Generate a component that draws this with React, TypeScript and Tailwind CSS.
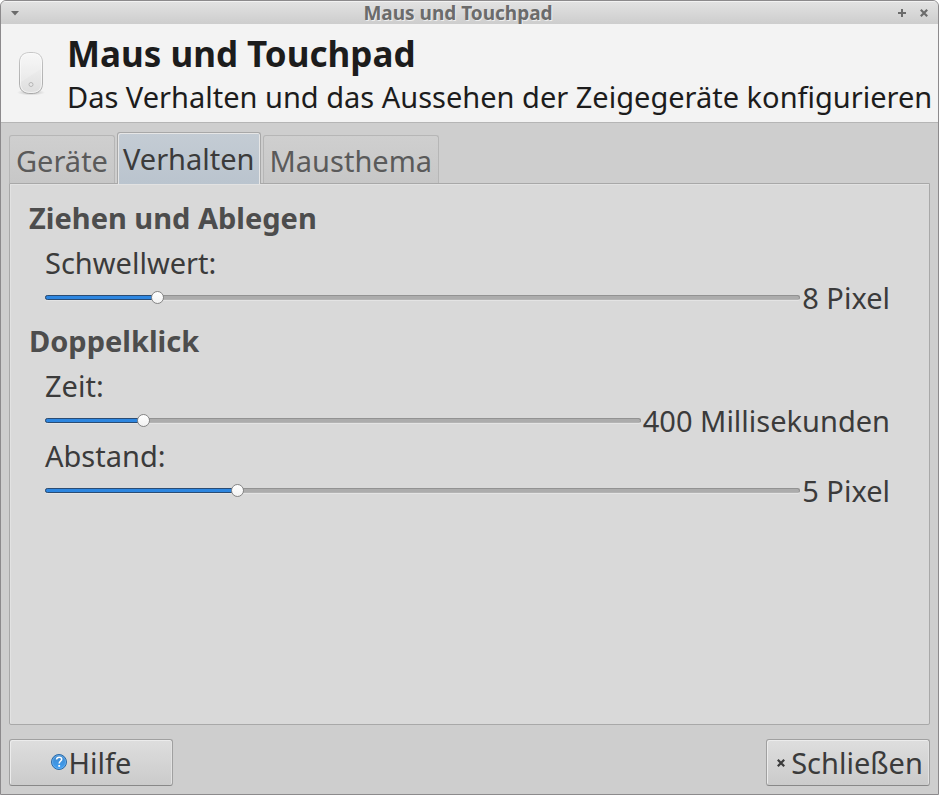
import { useState } from "react";

interface SliderRowProps {
  id: string;
  label: string;
  unit: string;
  min: number;
  max: number;
  step?: number;
  initial: number;
}

function SliderRow({ id, label, unit, min, max, step = 1, initial }: SliderRowProps) {
  const [value, setValue] = useState(initial);
  const percent = ((value - min) / (max - min)) * 100;

  return (
    <div>
      <label htmlFor={id} className="block w-fit">
        {label}
      </label>
      <div className="flex items-center gap-[2px]">
        <div className="relative flex h-[14px] min-w-0 flex-1 items-center">
          <div className="h-[5px] w-full overflow-hidden rounded-full border border-[#929292] border-b-[#b4b4b4] bg-[#acacac] shadow-[0_1px_0_#e4e4e4]" />
          <div
            className="absolute left-0 h-[5px] rounded-l-full border border-[#2a4c74] bg-[#2d86e0]"
            style={{ width: `${percent}%` }}
          />
          <input
            id={id}
            type="range"
            min={min}
            max={max}
            step={step}
            value={value}
            onChange={(e) => setValue(Number(e.target.value))}
            className="absolute inset-0 m-0 h-[14px] w-full appearance-none bg-transparent outline-none [&::-webkit-slider-thumb]:size-[13px] [&::-webkit-slider-thumb]:appearance-none [&::-webkit-slider-thumb]:rounded-full [&::-webkit-slider-thumb]:border [&::-webkit-slider-thumb]:border-[#858585] [&::-webkit-slider-thumb]:bg-linear-to-b [&::-webkit-slider-thumb]:from-white [&::-webkit-slider-thumb]:to-[#f2f2f2]"
          />
        </div>
        <output htmlFor={id} className="whitespace-nowrap">
          {value} {unit}
        </output>
      </div>
    </div>
  );
}

function MouseIcon() {
  return (
    <svg viewBox="0 0 28 48" className="h-[48px] w-[28px] shrink-0" aria-hidden="true">
      <defs>
        <linearGradient id="mouseBody" x1="0" y1="0" x2="0" y2="1">
          <stop offset="0" stopColor="#f6f6f6" />
          <stop offset="1" stopColor="#dedede" />
        </linearGradient>
        <linearGradient id="mouseEdge" x1="0" y1="0" x2="0" y2="1">
          <stop offset="0" stopColor="#c6c6c6" />
          <stop offset="1" stopColor="#a8a8a8" />
        </linearGradient>
        <radialGradient id="mouseShadow">
          <stop offset="0" stopColor="#000" stopOpacity="0.25" />
          <stop offset="1" stopColor="#000" stopOpacity="0" />
        </radialGradient>
      </defs>
      <ellipse cx="14" cy="43.500" rx="14" ry="3" fill="url(#mouseShadow)" />
      <path
        d="M14 3.500C20 3.500 25.500 5 25.500 14V34C25.500 42 21 44.500 14 44.500C7 44.500 2.500 42 2.500 34V14C2.500 5 8 3.500 14 3.500Z"
        fill="url(#mouseBody)"
        stroke="url(#mouseEdge)"
      />
      <path
        d="M14 4.500C19.500 4.500 24.500 6 24.500 14V34C24.500 41 20.500 43.500 14 43.500C7.500 43.500 3.500 41 3.500 34V14C3.500 6 8.500 4.500 14 4.500Z"
        fill="none"
        stroke="#fff"
        opacity="0.6"
      />
      <path d="M4 14C4 6 9 5 14 5C19 5 24 6 24 14V20L4 33Z" fill="#fff" opacity="0.2" />
      <circle cx="14" cy="35.500" r="2" fill="#e8e8e8" stroke="#b6b6b6" />
    </svg>
  );
}

function HelpIcon() {
  return (
    <svg viewBox="1 1 18 18" className="size-[18px] shrink-0" aria-hidden="true">
      <defs>
        <linearGradient id="helpFill" x1="0" y1="0" x2="0" y2="1">
          <stop offset="0" stopColor="#3f86c8" />
          <stop offset="1" stopColor="#40a0f6" />
        </linearGradient>
      </defs>
      <circle cx="9" cy="9" r="7.500" fill="url(#helpFill)" stroke="#2d6ba8" />
      <circle cx="9" cy="9" r="6.500" fill="none" stroke="#7cbcf2" strokeWidth="0.600" />
      <path
        d="M6.500 6.500C6.700 4.600 8 4.200 9.200 4.200C10.700 4.200 11.700 5 11.700 6.300C11.700 8 9.200 8.200 9.200 10.600"
        fill="none"
        stroke="#fff"
        strokeWidth="1.500"
      />
      <rect x="8.300" y="12" width="1.800" height="1.800" fill="#fff" />
    </svg>
  );
}

function CrossIcon({ className }: { className: string }) {
  return (
    <svg viewBox="0 0 8 8" className={className} aria-hidden="true">
      <path d="M0.800 0.800L7.200 7.200M7.200 0.800L0.800 7.200" stroke="currentColor" strokeWidth="2.200" />
    </svg>
  );
}

const tabs = ["Geräte", "Verhalten", "Mausthema"];

const buttonClass =
  "flex h-[47px] w-[164px] items-center justify-center rounded-[3px] border border-[#a0a0a0] border-b-[#888] bg-linear-to-b from-[#dedede] to-[#cbcbcb] shadow-[inset_1px_1px_0_#ececec,inset_-1px_0_0_#e2e2e2] active:from-[#c4c4c4]";

export default function App() {
  const [activeTab, setActiveTab] = useState("Verhalten");

  return (
    <div className="min-h-screen bg-white font-['Noto_Sans',sans-serif] text-[29px] leading-[35px] text-[#3b3b3b]">
      <div className="flex min-h-screen flex-col overflow-hidden rounded-t-[6px] border border-[#8c8a8c] bg-[#cecece]">
        <div className="flex h-[23px] shrink-0 items-center border-t border-[#f2f2f2] bg-linear-to-b from-[#e2e2e2] to-[#cdcdcd] px-[9px] text-[#6b6b6b]">
          <div className="flex flex-1">
            <button type="button" aria-label="Fenstermenü" className="flex size-[10px] items-center justify-center">
              <svg viewBox="0 0 8 5" className="h-[5px] w-[8px]" aria-hidden="true">
                <path d="M0 0H8L4 4.500Z" fill="currentColor" />
              </svg>
            </button>
          </div>
          <h1 className="mr-[22px] text-[19px] leading-[22px] font-bold [text-shadow:1px_1px_0_#eee]">
            Maus und Touchpad
          </h1>
          <div className="flex flex-1 items-center justify-end gap-[14px] pr-px">
            <button type="button" aria-label="Maximieren" className="size-[8px]">
              <svg viewBox="0 0 8 8" className="size-[8px]" aria-hidden="true">
                <path d="M4 0V8M0 4H8" stroke="currentColor" strokeWidth="2" />
              </svg>
            </button>
            <button type="button" aria-label="Fenster schließen" className="size-[8px]">
              <CrossIcon className="size-[8px]" />
            </button>
          </div>
        </div>

        <header className="flex shrink-0 items-center gap-[22px] border-b border-[#b5b5b5] bg-[#f3f3f3] py-[6px] pl-4 text-[#1c1c1c]">
          <MouseIcon />
          <div className="whitespace-nowrap">
            <h2 className="text-[35px] leading-[48px] font-bold">Maus und Touchpad</h2>
            <p className="leading-[38px]">Das Verhalten und das Aussehen der Zeigegeräte konfigurieren</p>
          </div>
        </header>

        <main className="flex flex-1 flex-col px-2 pt-[9px] pb-2">
          <div role="tablist" className="flex items-end gap-[2px]">
            {tabs.map((tab) => (
              <button
                key={tab}
                type="button"
                role="tab"
                aria-selected={tab === activeTab}
                onClick={() => setActiveTab(tab)}
                className={
                  tab === activeTab
                    ? "relative z-10 -mb-px h-[52px] rounded-t-[3px] border border-b-0 border-[#a8a8a8] bg-linear-to-b from-[#c4ccd4] to-[#bac4ce] px-[5px] shadow-[inset_1px_1px_0_#e6e6e6,inset_-1px_0_0_#e6e6e6]"
                    : "h-[48px] rounded-t-[3px] border border-b-0 border-[#b6b6b6] bg-linear-to-b from-[#cfcfcf] to-[#c7c7c7] px-[6px] pt-[2px] text-[#5a5a5a]"
                }
              >
                {tab}
              </button>
            ))}
          </div>

          <div
            role="tabpanel"
            className="flex-1 rounded-b-[2px] border border-[#a8a8a8] bg-[#d9d9d9] py-4 pr-[39px] pl-[19px] shadow-[inset_1px_1px_0_#e2e2e2]"
          >
            {activeTab === "Verhalten" && (
              <div className="flex flex-col gap-2">
                <section>
                  <h3 className="mb-[10px] font-bold text-[#4d4d4d]">Ziehen und Ablegen</h3>
                  <div className="pl-4">
                    <SliderRow id="threshold" label="Schwellwert:" unit="Pixel" min={1} max={50} initial={8} />
                  </div>
                </section>
                <section>
                  <h3 className="mb-[10px] font-bold text-[#4d4d4d]">Doppelklick</h3>
                  <div className="pl-4">
                    <SliderRow
                      id="time"
                      label="Zeit:"
                      unit="Millisekunden"
                      min={100}
                      max={2000}
                      step={10}
                      initial={400}
                    />
                    <SliderRow id="distance" label="Abstand:" unit="Pixel" min={0} max={20} initial={5} />
                  </div>
                </section>
              </div>
            )}
          </div>

          <div className="mt-[14px] flex shrink-0 justify-between">
            <button type="button" className={buttonClass}>
              <HelpIcon />
              Hilfe
            </button>
            <button type="button" className={`${buttonClass} gap-[6px] pl-1`}>
              <CrossIcon className="size-[8px] shrink-0" />
              Schließen
            </button>
          </div>
        </main>
      </div>
    </div>
  );
}
